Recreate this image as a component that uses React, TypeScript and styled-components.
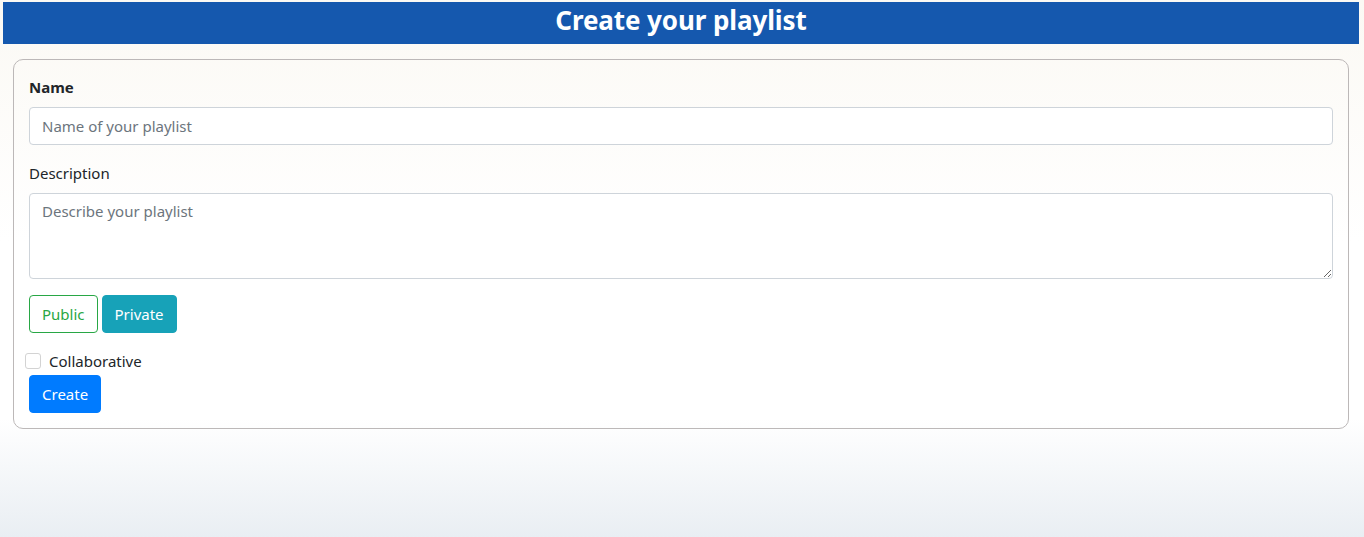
import React from "react";
import styled, { createGlobalStyle } from "styled-components";

const Global = createGlobalStyle`
  html, body { margin: 0; padding: 0; }
  body {
    min-height: 537px;
    font-family: "Noto Sans", "Open Sans", Arial, sans-serif;
    color: #212529;
    background: linear-gradient(180deg, #fbf9f4 0%, #ffffff 45%, #ffffff 78%, #e9eef3 100%);
    background-attachment: fixed;
  }
  #root { min-height: 537px; }
`;

const Header = styled.header`
  margin: 2px 5px 0 3px;
  height: 42px;
  background: #1558ae;
  color: #fff;
  display: flex;
  align-items: center;
  justify-content: center;
`;

const Title = styled.h1`
  margin: 0 0 6px 0;
  font-size: 26px;
  font-weight: 700;
  letter-spacing: -0.1px;
  line-height: 1;
`;

const Card = styled.form`
  margin: 15px 15px 0 13px;
  border: 1px solid #bcb8b8;
  border-radius: 10px;
  padding: 16px 15px 15px 15px;
`;

const Group = styled.div<{ $gap?: number }>`
  display: flex;
  flex-direction: column;
  margin-bottom: ${(p) => p.$gap ?? 16}px;
`;

const Label = styled.label<{ $bold?: boolean }>`
  font-size: 15px;
  line-height: 22px;
  font-weight: ${(p) => (p.$bold ? 700 : 400)};
  margin-top: ${(p) => (p.$bold ? 0 : 1)}px;
  margin-bottom: ${(p) => (p.$bold ? 9 : 9)}px;
`;

const fieldCss = `
  box-sizing: border-box;
  width: 100%;
  border: 1px solid #ced4da;
  border-radius: 4px;
  background: #fff;
  font-family: "Noto Sans", "Open Sans", Arial, sans-serif;
  font-size: 15px;
  color: #495057;
  padding: 6px 12px;
  outline: none;
  &::placeholder { color: #6c757d; }
`;

const Input = styled.input`
  ${fieldCss}
  height: 38px;
`;

const TextArea = styled.textarea`
  ${fieldCss}
  height: 86px;
  line-height: 1.5;
  resize: vertical;
  display: block;
`;

const ButtonRow = styled.div`
  display: flex;
  gap: 4px;
  margin-bottom: 17px;
`;

const Btn = styled.button<{ $color: string; $outline?: boolean }>`
  height: 38px;
  padding: 0 12px;
  border-radius: 4px;
  font-family: "Noto Sans", "Open Sans", Arial, sans-serif;
  font-size: 15px;
  cursor: pointer;
  border: 1px solid ${(p) => p.$color};
  background: ${(p) => (p.$outline ? "transparent" : p.$color)};
  color: ${(p) => (p.$outline ? p.$color : "#fff")};
`;

const CheckRow = styled.label`
  display: flex;
  align-items: center;
  gap: 8px;
  margin-left: -4px;
  font-size: 15px;
  line-height: 22px;
  margin-bottom: 3px;
`;

const Check = styled.span`
  width: 14px;
  height: 14px;
  border: 1px solid #d3d3d3;
  border-radius: 3px;
  background: #fff;
`;

export default function App() {
  return (
    <>
      <Global />
      <Header>
        <Title>Create your playlist</Title>
      </Header>
      <Card onSubmit={(e) => e.preventDefault()}>
        <Group>
          <Label $bold>Name</Label>
          <Input placeholder="Name of your playlist" />
        </Group>
        <Group>
          <Label>Description</Label>
          <TextArea placeholder="Describe your playlist" />
        </Group>
        <ButtonRow>
          <Btn type="button" $color="#28a745" $outline>Public</Btn>
          <Btn type="button" $color="#17a2b8">Private</Btn>
        </ButtonRow>
        <CheckRow>
          <Check />
          Collaborative
        </CheckRow>
        <Btn type="submit" $color="#007bff">Create</Btn>
      </Card>
    </>
  );
}
